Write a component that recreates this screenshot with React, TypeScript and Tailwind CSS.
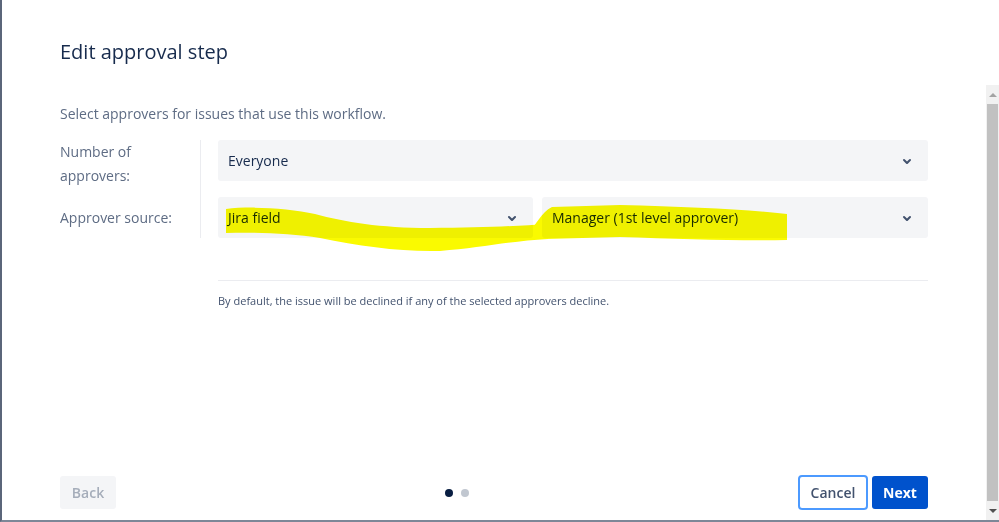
import React from 'react';

const font = "font-['Open_Sans','Noto_Sans',sans-serif]";

function Chevron() {
  return (
    <svg width="24" height="24" viewBox="0 0 24 24" className="shrink-0 text-[#42526e]">
      <path
        fill="currentColor"
        d="M8.292 10.293a1.009 1.009 0 0 0 0 1.419l2.939 2.965c.218.215.5.322.779.322s.556-.107.769-.322l2.93-2.955a1.01 1.01 0 0 0 0-1.419.987.987 0 0 0-1.406 0l-2.298 2.317-2.307-2.327a.99.99 0 0 0-1.406 0z"
      />
    </svg>
  );
}

function Select({ value, className = '' }: { value: string; className?: string }) {
  return (
    <div className={`h-[41px] bg-[#f4f5f7] rounded-[3px] flex items-center justify-between pl-[10px] pr-[9px] ${className}`}>
      <span className="text-[14px] text-[#172b4d] leading-5">{value}</span>
      <Chevron />
    </div>
  );
}

export default function App() {
  return (
    <div className={`relative w-[999px] h-[522px] bg-white flex border-l-[2px] border-b-[2px] border-l-[#5b667a] border-b-[#7d8797] overflow-hidden ${font}`}>
      {/* dialog body */}
      <div className="flex-1 flex flex-col pl-[58px] pr-[58px] pb-[10px]">
        <h1 className="mt-[40px] text-[20px] leading-6 text-[#172b4d]">Edit approval step</h1>
        <p className="mt-[40px] text-[14px] leading-5 text-[#5e6c84]">
          Select approvers for issues that use this workflow.
        </p>

        {/* form rows */}
        <div className="mt-[16px] flex">
          <div className="w-[141px] border-r border-[#ebecf0] text-[14px] text-[#5e6c84]">
            <div className="h-[57px] leading-6">
              Number of
              <br />
              approvers:
            </div>
            <div className="h-[41px] flex items-center">Approver source:</div>
          </div>
          <div className="flex-1 pl-[17px]">
            <Select value="Everyone" />
            <div className="mt-[16px] flex gap-[9px]">
              <Select value="Jira field" className="w-[315px]" />
              <Select value="Manager (1st level approver)" className="flex-1" />
            </div>
          </div>
        </div>

        <div className="ml-[158px] mt-[42px] border-t border-[#ebecf0]" />
        <p className="ml-[158px] mt-[12px] text-[11px] leading-4 text-[#42526e]">
          By default, the issue will be declined if any of the selected approvers decline.
        </p>

        {/* footer */}
        <div className="mt-auto flex items-center">
          <button className="h-[33px] w-[56px] rounded-[3px] bg-[#f4f5f7] text-[14px] font-semibold text-[#a5adba]">
            Back
          </button>
          <div className="ml-[329px] flex gap-[8px]">
            <span className="w-[8px] h-[8px] rounded-full bg-[#091e42]" />
            <span className="w-[8px] h-[8px] rounded-full bg-[#c1c7d0]" />
          </div>
          <div className="ml-auto flex gap-[4px]">
            <button className="h-[35px] w-[70px] rounded-[4px] border-2 border-[#4c9aff] bg-white text-[14px] font-semibold text-[#42526e]">
              Cancel
            </button>
            <button className="h-[33px] w-[56px] mt-[1px] rounded-[3px] bg-[#0052cc] text-[14px] font-bold text-white">
              Next
            </button>
          </div>
        </div>
      </div>

      {/* scrollbar */}
      <div className="w-[13px] mt-[85px] bg-[#f1f1f1] flex flex-col items-center">
        <div className="h-[19px] flex items-center justify-center">
          <span className="w-0 h-0 border-l-[4px] border-r-[4px] border-b-[4px] border-l-transparent border-r-transparent border-b-[#a3a3a3]" />
        </div>
        <div className="w-[11px] flex-1 bg-[#c1c1c1]" />
        <div className="h-[19px] flex items-center justify-center">
          <span className="w-0 h-0 border-l-[4px] border-r-[4px] border-t-[4px] border-l-transparent border-r-transparent border-t-[#505050]" />
        </div>
      </div>

      {/* yellow marker scribbles on top */}
      <svg className="absolute left-[-2px] top-0 pointer-events-none mix-blend-multiply" width="999" height="522">
        <path
          fill="#fafa00"
          d="M226,209 C250,206 290,208 315,214 C345,222 380,228 430,228 C480,228 515,226 548,224 L548,239 C510,241 480,248 440,251 C400,252 360,246 320,238 C290,233 255,232 226,233 Z"
        />
        <path
          fill="#fafa00"
          d="M530,230 C536,226 541,212 552,207 L620,205 C690,207 745,209 787,214 L787,240 C740,241 680,239 620,237 L545,239 C538,239 532,238 530,236 Z"
        />
      </svg>
    </div>
  );
}
